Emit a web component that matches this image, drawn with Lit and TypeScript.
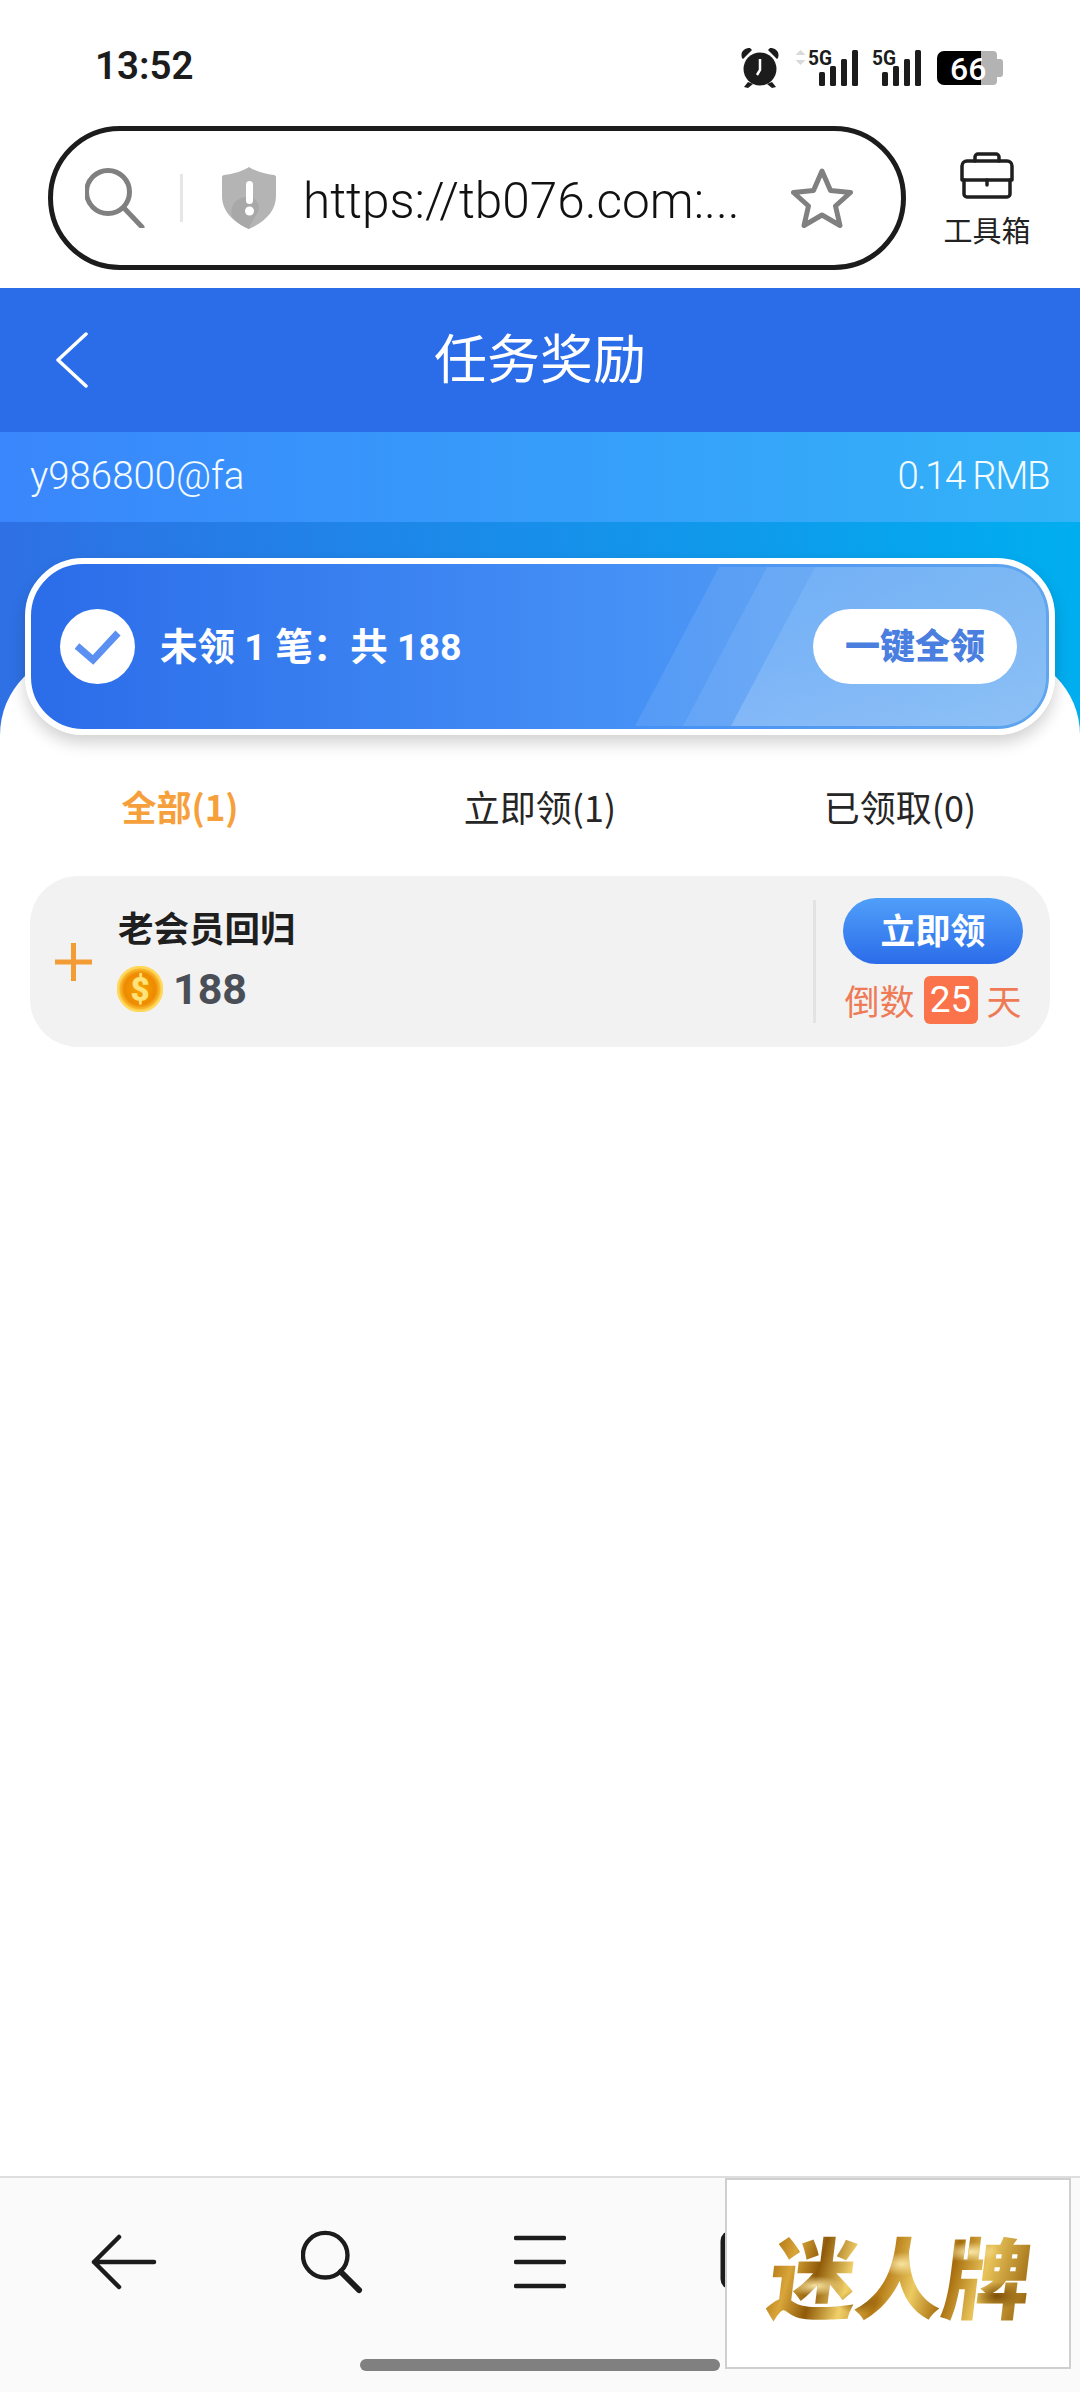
import { LitElement, html, css } from "lit";
import { customElement } from "lit/decorators.js";

@customElement("app-root")
export class AppRoot extends LitElement {
  static styles = css`
    :host {
      display: block;
      width: 1080px;
      height: 2392px;
      font-family: Roboto, "Noto Sans CJK SC", sans-serif;
      background: #fff;
    }
    .page {
      position: relative;
      width: 1080px;
      height: 2392px;
      display: flex;
      flex-direction: column;
      overflow: hidden;
    }
    svg { display: block; flex: none; }

    .status {
      height: 126px;
      box-sizing: border-box;
      padding: 44px 77px 0 95px;
      display: flex;
      justify-content: space-between;
      align-items: flex-start;
    }
    .time {
      font-size: 38.500px;
      line-height: 44px;
      font-weight: 600;
      color: #1c1c1c;
    }
    .status-icons { margin-top: 2px; }
    .batt-text {
      font: 500 32px Roboto, sans-serif;
      fill: #fff;
    }

    .browser {
      height: 162px;
      box-sizing: border-box;
      padding-left: 48px;
      display: flex;
      align-items: flex-start;
    }
    .addr {
      width: 858px;
      height: 144px;
      box-sizing: border-box;
      border: 5px solid #1c1c1c;
      border-radius: 72px;
      display: flex;
      align-items: center;
      padding-left: 32px;
    }
    .addr-sep {
      width: 3px;
      height: 48px;
      background: #e6e6e6;
      margin: 0 39px 0 35px;
    }
    .url {
      margin-left: 27px;
      width: 488px;
      font-size: 49.500px;
      line-height: 60px;
      font-weight: 300;
      color: #111;
      white-space: nowrap;
      padding-top: 6px;
    }
    .toolbox {
      flex: 1;
      display: flex;
      flex-direction: column;
      align-items: center;
      padding-top: 26px;
      padding-right: 12px;
    }
    .toolbox span {
      font: 400 29px/34px "Noto Sans CJK SC", sans-serif;
      color: #222;
      margin-top: 13px;
    }

    .nav {
      height: 144px;
      box-sizing: border-box;
      padding-bottom: 8px;
      background: #2b6ce9;
      position: relative;
      display: flex;
      align-items: center;
      justify-content: center;
      color: #fff;
      font: 400 53px/60px "Noto Sans CJK SC", sans-serif;
    }
    .nav svg { position: absolute; left: 55px; top: 44px; }

    .sub {
      height: 90px;
      box-sizing: border-box;
      padding: 0 31px 3px 30px;
      display: flex;
      justify-content: space-between;
      align-items: center;
      background: linear-gradient(90deg, #3a86fc, #33b3f8);
      color: #f2fbff;
      font-size: 38.400px;
      font-weight: 300;
    }
    .balance { letter-spacing: -1.500px; }

    .hero {
      position: relative;
      height: 213px;
      box-sizing: border-box;
      padding: 36px 25px 0;
      background: linear-gradient(90deg, #2f70e5, #00aeef);
    }
    .hero::after {
      content: "";
      position: absolute;
      left: 0;
      right: 0;
      bottom: 0;
      height: 82px;
      background: #fff;
      border-radius: 82px 82px 0 0;
    }
    .card {
      position: relative;
      z-index: 1;
      height: 177px;
      box-sizing: border-box;
      border: 6px solid #fff;
      border-radius: 58px;
      background: linear-gradient(90deg, #2b6ce9 0%, #4590f6 58%, #5fa6ee 100%);
      box-shadow: 0 8px 16px rgba(0, 0, 0, 0.18);
      display: flex;
      align-items: center;
      padding: 0 32px 0 29px;
      color: #fff;
    }
    .stripes {
      position: absolute;
      inset: 3px 3px 3px 0;
      border-radius: 48px;
    }
    .check, .claim-all, .card-text { position: relative; }
    .check {
      width: 75px;
      height: 75px;
      border-radius: 50%;
      background: #fff;
      display: flex;
      align-items: center;
      justify-content: center;
      flex: none;
    }
    .card-text {
      margin-left: 25px;
      font: 700 37.500px/46px Roboto, "Noto Sans CJK SC", sans-serif;
      white-space: pre;
    }
    .claim-all {
      margin-left: auto;
      width: 204px;
      height: 75px;
      border-radius: 38px;
      background: #fff;
      color: #4a7fe0;
      font: 900 35px/70px "Noto Sans CJK SC", sans-serif;
      text-align: center;
    }

    .tabs {
      height: 141px;
      box-sizing: border-box;
      display: grid;
      grid-template-columns: repeat(3, 1fr);
      align-items: center;
      text-align: center;
      font: 400 36px/44px "Noto Sans CJK SC", sans-serif;
      color: #262626;
    }
    .tab-on { font-weight: 700; font-size: 35px; color: #f6a03c; }

    .item {
      margin: 0 30px;
      height: 171px;
      border-radius: 48px;
      background: #f2f2f2;
      display: flex;
      align-items: center;
      padding-left: 25px;
    }
    .info {
      margin-left: 26px;
      display: flex;
      flex-direction: column;
      gap: 16px;
      margin-bottom: 7px;
    }
    .item-title {
      font: 700 35.500px/46px "Noto Sans CJK SC", sans-serif;
      color: #1f1f1f;
    }
    .amount {
      display: flex;
      align-items: center;
      gap: 10px;
      margin-left: -1px;
      font: 700 43px/46px Roboto, sans-serif;
      color: #4a4e57;
    }
    .item-sep {
      margin-left: auto;
      width: 3px;
      height: 123px;
      background: #e3e3e3;
    }
    .item-right {
      width: 180px;
      margin: 0 27px;
      display: flex;
      flex-direction: column;
      align-items: center;
      gap: 12px;
      padding-bottom: 1px;
    }
    .now {
      width: 180px;
      height: 66px;
      border-radius: 33px;
      background: linear-gradient(180deg, #509ffa, #2b6ce9);
      color: #fff;
      font: 700 35px/61px "Noto Sans CJK SC", sans-serif;
      text-align: center;
    }
    .count {
      display: flex;
      align-items: center;
      gap: 9px;
      color: #ef7a56;
      font: 400 35px/42px "Noto Sans CJK SC", sans-serif;
      white-space: nowrap;
      height: 48px;
    }
    .days {
      width: 54px;
      height: 48px;
      border-radius: 6px;
      background: #fb734a;
      color: #fff;
      font: 400 37px/48px Roboto, sans-serif;
      text-align: center;
    }

    .bottom {
      margin-top: auto;
      height: 216px;
      box-sizing: border-box;
      border-top: 2px solid #dedede;
      background: #fafafa;
      padding: 0 20px;
      display: grid;
      grid-template-columns: repeat(5, 208px);
      justify-items: center;
      align-items: start;
    }
    .bottom svg { margin-top: 56px; }
    .bottom svg.tall { margin-top: 52px; }
    .indicator {
      position: absolute;
      left: 360px;
      top: 2359px;
      width: 360px;
      height: 12px;
      border-radius: 6px;
      background: #808080;
    }
    .ad {
      position: absolute;
      left: 725px;
      top: 2178px;
      width: 346px;
      height: 191px;
      box-sizing: border-box;
      border: 2px solid #cfcfcf;
      background: #fff;
      display: flex;
      align-items: center;
      justify-content: center;
      padding-left: 6px;
    }
    .ad span {
      font: 900 88px/100px "Noto Sans CJK SC", sans-serif;
      letter-spacing: -1px;
      transform: skewX(-7deg);
      background:
        radial-gradient(ellipse 26px 10px at 18% 62%, #fbe9a8, transparent),
        radial-gradient(ellipse 22px 12px at 50% 40%, #f8e3a0, transparent),
        radial-gradient(ellipse 30px 10px at 76% 28%, #fae7a6, transparent),
        radial-gradient(ellipse 24px 14px at 88% 72%, #7d4e05, transparent),
        radial-gradient(ellipse 24px 12px at 36% 78%, #8a5a0a, transparent),
        linear-gradient(100deg, #a8690a 0%, #d9a63a 10%, #8f5a08 20%, #f1d06a 32%, #b57a14 44%, #ecca62 56%, #a66c0c 68%, #e9c45a 80%, #94600a 100%);
      -webkit-background-clip: text;
      background-clip: text;
      color: transparent;
    }
  `;

  render() {
    return html`
      <div class="page">
        <div class="status">
          <div class="time">13:52</div>
          <svg class="status-icons" width="268" height="46" viewBox="735 46 268 46">
            <g fill="#1c1c1c">
              <circle cx="760" cy="69" r="16.500"/>
              <path d="M742 58c-2-6 2-10 8-10l2 2-9 9zM778 58c2-6-2-10-8-10l-2 2 9 9z"/>
              <path d="M748 82l-4 5 4 1 5-4zM772 82l4 5-4 1-5-4z"/>
              <rect x="819" y="72" width="6" height="14" rx="1.500"/>
              <rect x="830" y="66" width="6" height="20" rx="1.500"/>
              <rect x="841" y="59" width="6" height="27" rx="1.500"/>
              <rect x="852" y="50" width="6" height="36" rx="1.500"/>
              <rect x="882" y="72" width="6" height="14" rx="1.500"/>
              <rect x="893" y="66" width="6" height="20" rx="1.500"/>
              <rect x="904" y="59" width="6" height="27" rx="1.500"/>
              <rect x="915" y="50" width="6" height="36" rx="1.500"/>
              <text x="808" y="65" font-family="Roboto" font-weight="700" font-size="21" textLength="24" lengthAdjust="spacingAndGlyphs">5G</text>
              <text x="872" y="65" font-family="Roboto" font-weight="700" font-size="21" textLength="24" lengthAdjust="spacingAndGlyphs">5G</text>
            </g>
            <path d="M760 59v11l-3 5" fill="none" stroke="#fff" stroke-width="2.500"/>
            <path d="M800.500 50l5 5h-10zM800.500 65l5-5h-10z" fill="#d9d9d9"/>
            <path d="M981 51h12a4 4 0 0 1 4 4v4h3a3 3 0 0 1 3 3v12a3 3 0 0 1-3 3h-3v4a4 4 0 0 1-4 4h-12z" fill="#b3b3b3"/>
            <path d="M944 51h37v34h-37a7 7 0 0 1-7-7v-20a7 7 0 0 1 7-7z" fill="#000"/>
            <text class="batt-text" x="950" y="80">66</text>
          </svg>
        </div>

        <div class="browser">
          <div class="addr">
            <svg width="60" height="60" viewBox="0 0 60 60" fill="none" stroke="#808080" stroke-width="5" stroke-linecap="round">
              <circle cx="23" cy="24" r="21.500"/>
              <path d="M39 40l18 19"/>
            </svg>
            <div class="addr-sep"></div>
            <svg width="54" height="62" viewBox="0 0 54 62">
              <path d="M27 0c6 4 16 7 25 8 1 0 2 1 2 2v19c0 15-11 26-27 33C11 55 0 44 0 29V10c0-1 1-2 2-2 9-1 19-4 25-8z" fill="#b4b4b4"/>
              <path d="M10 50c-3-12 5-21 17-20 8 1 12 8 9 15-3 6-8 11-9 17-7-3-13-7-17-12z" fill="#a8a8a8"/>
              <rect x="24" y="14" width="7" height="23" rx="3.500" fill="#fff"/>
              <circle cx="27.500" cy="44" r="4.500" fill="#fff"/>
            </svg>
            <div class="url">https://tb076.com:...</div>
            <svg width="62" height="60" viewBox="0 0 62 60" fill="none" stroke="#808080" stroke-width="5" stroke-linejoin="round">
              <path d="M31 3l8.500 19.500 20 2-15 13.500 4.500 19.500L31 47l-18 10.500 4.500-19.500-15-13.500 20-2z"/>
            </svg>
          </div>
          <div class="toolbox">
            <svg width="54" height="47" viewBox="0 0 54 47" fill="none" stroke="#1f1f1f" stroke-width="3.500" stroke-linejoin="round" stroke-linecap="round">
              <path d="M15 9V5a3 3 0 0 1 3-3h18a3 3 0 0 1 3 3v4"/>
              <path d="M2 28V14a5 5 0 0 1 5-5h40a5 5 0 0 1 5 5v14z"/>
              <path d="M4 28v14a3 3 0 0 0 3 3h40a3 3 0 0 0 3-3V28"/>
              <path d="M27 28v5"/>
            </svg>
            <span>工具箱</span>
          </div>
        </div>

        <div class="nav">
          <svg width="34" height="56" viewBox="0 0 34 56" fill="none" stroke="#fff" stroke-width="3.500" stroke-linecap="round" stroke-linejoin="round">
            <path d="M31 2L3 28l28 26"/>
          </svg>
          任务奖励
        </div>

        <div class="sub">
          <span>y986800@fa</span>
          <span class="balance">0.14 RMB</span>
        </div>

        <div class="hero">
          <div class="card">
            <svg class="stripes" width="1015" height="159" viewBox="0 0 1015 159" preserveAspectRatio="none">
              <defs>
                <linearGradient id="glow" x1="0" y1="0" x2="0" y2="1">
                  <stop offset="0%" stop-color="#9fd2ff" stop-opacity="0.16"/>
                  <stop offset="100%" stop-color="#d2e8ff" stop-opacity="0.26"/>
                </linearGradient>
              </defs>
              <polygon points="688,0 1015,0 1015,159 604,159" fill="#bfe0ff" fill-opacity="0.13"/>
              <polygon points="736,0 1015,0 1015,159 652,159" fill="#bfe0ff" fill-opacity="0.13"/>
              <polygon points="784,0 1015,0 1015,159 700,159" fill="url(#glow)"/>
            </svg>
            <div class="check">
              <svg width="46" height="36" viewBox="0 0 46 36" fill="none" stroke="#5b8ff2" stroke-width="7">
                <path d="M2 17l16 14L43 4"/>
              </svg>
            </div>
            <div class="card-text">未领 1 笔：共 188</div>
            <div class="claim-all">一键全领</div>
          </div>
        </div>

        <div class="tabs">
          <div class="tab-on">全部(1)</div>
          <div>立即领(1)</div>
          <div>已领取(0)</div>
        </div>

        <div class="item">
          <svg width="37" height="38" viewBox="0 0 37 38" stroke="#f39b34" stroke-width="5">
            <path d="M0 19h37M18.500 0v38"/>
          </svg>
          <div class="info">
            <div class="item-title">老会员回归</div>
            <div class="amount">
              <svg width="46" height="46" viewBox="0 0 46 46">
                <defs>
                  <radialGradient id="coin" cx="50%" cy="50%" r="50%">
                    <stop offset="0%" stop-color="#f7a400"/>
                    <stop offset="70%" stop-color="#ee8a00"/>
                    <stop offset="100%" stop-color="#ffd54a"/>
                  </radialGradient>
                </defs>
                <circle cx="23" cy="23" r="22.500" fill="url(#coin)"/>
                <circle cx="23" cy="23" r="22" fill="none" stroke="#ffd75a" stroke-width="2.500"/>
                <text x="23" y="35" text-anchor="middle" font-family="Roboto" font-weight="900" font-size="33" fill="#ffe27a">$</text>
              </svg>
              188
            </div>
          </div>
          <div class="item-sep"></div>
          <div class="item-right">
            <div class="now">立即领</div>
            <div class="count"><span>倒数</span><span class="days">25</span><span>天</span></div>
          </div>
        </div>

        <div class="bottom">
          <svg width="66" height="56" viewBox="0 0 66 56" fill="none" stroke="#1c1c1c" stroke-width="4.500" stroke-linecap="round" stroke-linejoin="round">
            <path d="M63 28H3M28 3L3 28l25 25"/>
          </svg>
          <svg class="tall" width="62" height="64" viewBox="0 0 64 66" fill="none" stroke="#1c1c1c" stroke-linecap="round">
            <circle cx="25" cy="26" r="23" stroke-width="4.500"/>
            <path d="M41 43l19 19" stroke-width="6"/>
          </svg>
          <svg width="52" height="56" viewBox="0 0 52 56" stroke="#1c1c1c" stroke-linecap="round" stroke-width="4.500">
            <path d="M2 4h48M2 28h48M2 52h48"/>
          </svg>
          <svg class="tall" width="56" height="60" viewBox="0 0 56 60" fill="none" stroke="#1c1c1c" stroke-width="5" stroke-linejoin="round">
            <rect x="3" y="3" width="50" height="54" rx="8" stroke-dasharray="22 14 200"/>
          </svg>
          <svg width="56" height="56" viewBox="0 0 56 56"></svg>
        </div>

        <div class="indicator"></div>
        <div class="ad"><span>迷人牌</span></div>
      </div>
    `;
  }
}
